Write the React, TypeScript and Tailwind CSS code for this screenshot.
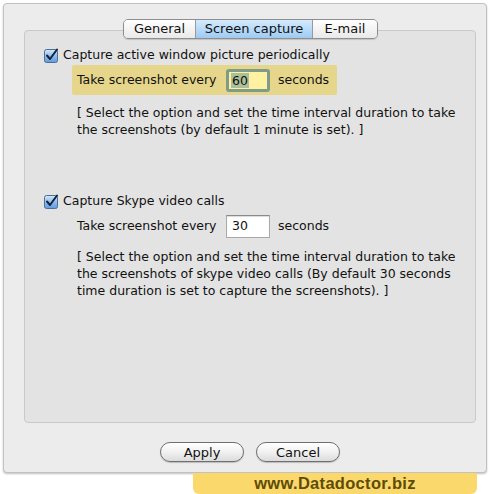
import React from "react"

const font = { fontFamily: '"DejaVu Sans", "Liberation Sans", sans-serif' }

const CheckBox = () => (
  <svg width="15" height="15" viewBox="0 0 15 15" className="shrink-0">
    <defs>
      <linearGradient id="cb" x1="0" y1="0" x2="0" y2="1">
        <stop offset="0" stopColor="#d6e8fb" />
        <stop offset="0.5" stopColor="#8fbdec" />
        <stop offset="1" stopColor="#5d9be0" />
      </linearGradient>
    </defs>
    <rect x="0.5" y="1.5" width="13" height="13" rx="2" fill="url(#cb)" stroke="#4d6f96" />
    <path d="M3 7.5 L6 11 L13 1.5" fill="none" stroke="#16243a" strokeWidth="2" strokeLinecap="round" strokeLinejoin="round" />
  </svg>
)

const Tabs = () => {
  const tabs = ["General", "Screen capture", "E-mail"]
  return (
    <div className="relative z-10 flex justify-center pl-[1px] -mb-[9px]">
      <div className="flex h-[20px] rounded-[5px] border border-[#8e8e8e] overflow-hidden shadow-[0_1px_1px_rgba(0,0,0,0.15)]">
        {tabs.map((t, i) => (
          <div
            key={t}
            className={
              "flex items-center justify-center text-[13px] text-[#111] border-[#9a9a9a] " +
              (i > 0 ? "border-l " : "") +
              (i === 0 ? "w-[71px] bg-gradient-to-b from-white to-[#e9e9e9]" : "") +
              (i === 1 ? "w-[117px] bg-gradient-to-b from-[#d4ebfd] to-[#9dcbf3]" : "") +
              (i === 2 ? "w-[65px] bg-gradient-to-b from-white to-[#e9e9e9]" : "")
            }
          >
            {t}
          </div>
        ))}
      </div>
    </div>
  )
}

const Button = ({ label }: { label: string }) => (
  <button className="w-[84px] h-[20px] rounded-full border border-[#6f6f6f] bg-gradient-to-b from-white via-[#f1f1f1] to-[#dcdcdc] text-[13px] text-[#111] leading-none shadow-[0_1px_1px_rgba(0,0,0,0.2)]">
    {label}
  </button>
)

export default function App() {
  return (
    <div className="relative w-[490px] h-[494px] bg-white overflow-hidden" style={font}>
      <div className="ml-[3px] mt-[3px] w-[484px] h-[470px] rounded-[4px] border border-[#c2c2c2] bg-[#ececec] shadow-[0_1px_2px_rgba(0,0,0,0.25)] flex flex-col pl-[20px] pr-[10px] pt-[15px]">
        <Tabs />
        <div className="h-[393px] rounded-[4px] border border-[#c9c9c9] bg-[#e3e3e3] text-[12.5px] text-[#111] pl-[19px] pt-[16px]">
          <div className="flex items-center gap-[4px] h-[16px]">
            <CheckBox />
            <span>Capture active window picture periodically</span>
          </div>
          <div className="mt-[2px] ml-[28px] w-[265px] h-[30px] rounded-[2px] bg-[#e6d68c] flex items-center pl-[5px]">
            <span className="w-[149px]">Take screenshot every</span>
            <div className="w-[44px] h-[23px] rounded-[3px] border-[3px] border-[#7f9c89] bg-[#fff1a2] flex items-center pl-[2px]">
              <span className="bg-[#abbf98] px-[1px] leading-[15px]">60</span>
            </div>
            <span className="ml-[8px]">seconds</span>
          </div>
          <p className="mt-[9px] ml-[33px] leading-[17.3px]">
            [ Select the option and set the time interval duration to take
            <br />
            the screenshots (by default 1 minute is set). ]
          </p>
          <div className="mt-[55px] flex items-center gap-[4px] h-[16px]">
            <CheckBox />
            <span>Capture Skype video calls</span>
          </div>
          <div className="mt-[5px] ml-[33px] h-[23px] flex items-center">
            <span className="w-[149px]">Take screenshot every</span>
            <div className="w-[44px] h-[23px] border border-[#a9a9a9] border-t-[#8a8a8a] bg-white flex items-center pl-[5px] shadow-[inset_0_1px_1px_rgba(0,0,0,0.15)]">
              30
            </div>
            <span className="ml-[8px]">seconds</span>
          </div>
          <p className="mt-[10px] ml-[33px] leading-[17.3px]">
            [ Select the option and set the time interval duration to take
            <br />
            the screenshots of skype video calls (By default 30 seconds
            <br />
            time duration is set to capture the screenshots). ]
          </p>
        </div>
        <div className="mt-[19px] flex justify-center gap-[12px]">
          <Button label="Apply" />
          <Button label="Cancel" />
        </div>
      </div>
      <div className="ml-[193px] w-[284px] h-[21px] rounded-b-[6px] bg-[#fbd86c] flex items-center justify-center">
        <span className="text-[16.5px] font-bold text-[#5e4c06] tracking-[0.3px]" style={{ fontFamily: '"Liberation Sans", Arial, sans-serif' }}>
          www.Datadoctor.biz
        </span>
      </div>
    </div>
  )
}
